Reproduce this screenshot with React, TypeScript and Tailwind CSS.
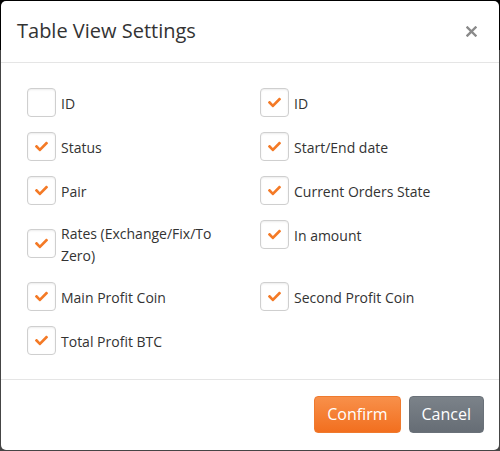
import { FaCheck } from 'react-icons/fa';

type Item = { label: string; checked: boolean };

const leftItems: Item[] = [
  { label: 'ID', checked: false },
  { label: 'Status', checked: true },
  { label: 'Pair', checked: true },
  { label: 'Rates (Exchange/Fix/To Zero)', checked: true },
  { label: 'Main Profit Coin', checked: true },
  { label: 'Total Profit BTC', checked: true },
];

const rightItems: Item[] = [
  { label: 'ID', checked: true },
  { label: 'Start/End date', checked: true },
  { label: 'Current Orders State', checked: true },
  { label: 'In amount', checked: true },
  { label: 'Second Profit Coin', checked: true },
];

const CheckItem = ({ item }: { item: Item }) => (
  <label className="flex items-center gap-[5px] cursor-pointer">
    <span className="shrink-0 w-[29px] h-[29px] rounded-[4px] border border-[#cfcfcf] bg-white shadow-[inset_0_1px_2px_rgba(0,0,0,0.08)] flex items-center justify-center">
      {item.checked && <FaCheck className="text-[#f47a26] w-[13px] h-[13px]" />}
    </span>
    <span className="max-w-[170px] pt-[3px] text-[14px] leading-[22px] text-[#333]">{item.label}</span>
  </label>
);

export default function App() {
  const rows = Math.max(leftItems.length, rightItems.length);

  return (
    <div
      className="w-[500px] h-[451px] p-px bg-[linear-gradient(to_bottom,#000_0,#000_50px,#454545_50px,#454545_100%)]"
      style={{ fontFamily: '"Open Sans", "Noto Sans", sans-serif' }}
    >
      <div className="h-full rounded-[5px] bg-white flex flex-col overflow-hidden">
        {/* Header */}
        <div className="h-[62px] shrink-0 flex items-center justify-between pl-[16px] pr-[18px] border-b border-[#e5e5e5]">
          <h4 className="text-[20px] text-[#333] leading-none pb-[2px]">Table View Settings</h4>
          <button className="text-[#8a8a8a] p-1" aria-label="Close">
            <svg width="11" height="11" viewBox="0 0 11 11">
              <path d="M1.5 1.5 L9.5 9.5 M9.5 1.5 L1.5 9.5" stroke="currentColor" strokeWidth="2.4" strokeLinecap="square" />
            </svg>
          </button>
        </div>

        {/* Body */}
        <div className="flex-1 pt-[25px] pl-[26px]">
          <div className="grid grid-cols-[233px_1fr] gap-y-[15px] items-start">
            {Array.from({ length: rows }).flatMap((_, i) => [
              <div key={`l${i}`}>{leftItems[i] && <CheckItem item={leftItems[i]} />}</div>,
              <div key={`r${i}`}>{rightItems[i] && <CheckItem item={rightItems[i]} />}</div>,
            ])}
          </div>
        </div>

        {/* Footer */}
        <div className="h-[71px] shrink-0 border-t border-[#e5e5e5] flex items-center justify-end gap-[8px] pr-[15px] pb-[2px]">
          <button className="h-[37px] px-[12px] rounded-[4px] text-white text-[16px] bg-[linear-gradient(to_bottom,#f8904a,#f26f1f)] border border-[#ef7a2e]">
            Confirm
          </button>
          <button className="h-[37px] px-[12px] rounded-[4px] text-white text-[16px] bg-[linear-gradient(to_bottom,#7b8289,#666d75)] border border-[#6a7179]">
            Cancel
          </button>
        </div>
      </div>
    </div>
  );
}
